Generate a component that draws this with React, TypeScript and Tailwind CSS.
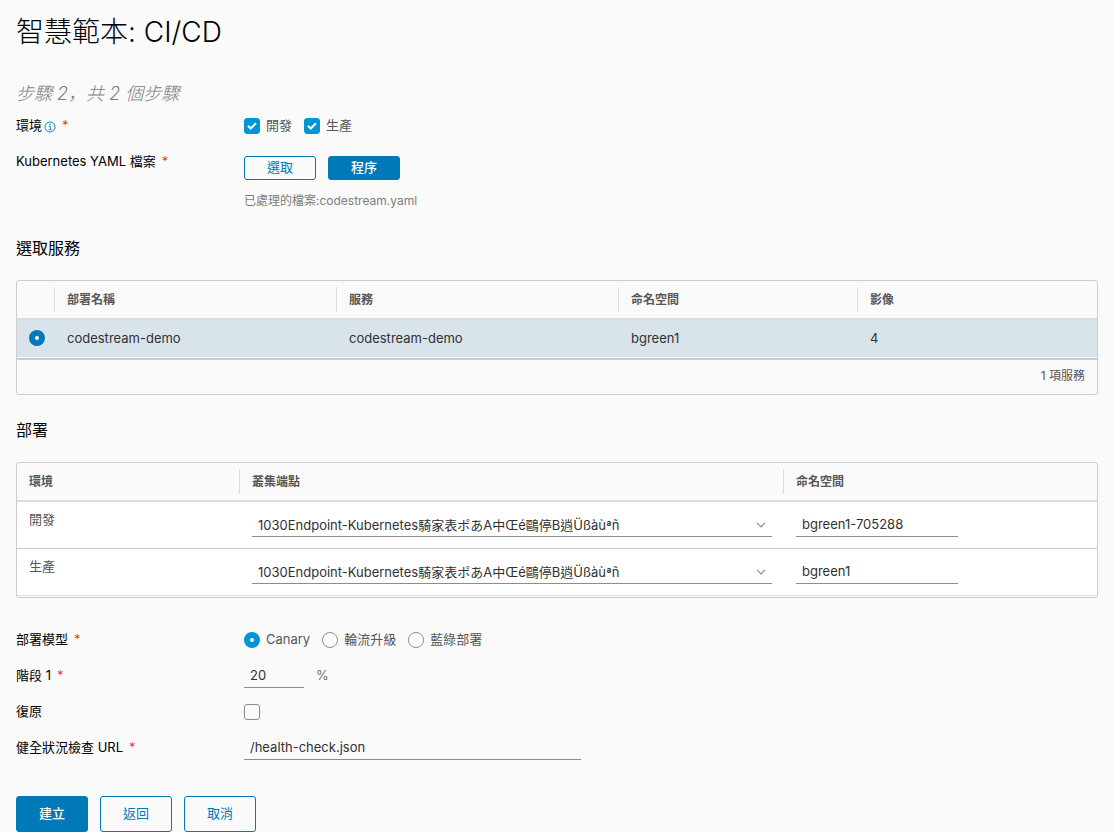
import { useState } from "react";
import type { ReactNode } from "react";
import { clsx } from "clsx";

type Option = {
  value: string;
  label: string;
};

const endpoint = "1030Endpoint-Kubernetes騎家表ポあA中Œé鷗停B逍Üßàùªñ";

const environments = [
  { id: "dev", name: "開發", namespace: "bgreen1-705288" },
  { id: "prod", name: "生產", namespace: "bgreen1" },
];

const services = [
  {
    deployment: "codestream-demo",
    service: "codestream-demo",
    namespace: "bgreen1",
    images: 4,
  },
];

const models: Option[] = [
  { value: "canary", label: "Canary" },
  { value: "rolling", label: "輪流升級" },
  { value: "blue-green", label: "藍綠部署" },
];

const inputClass =
  "h-6 rounded-none border-b border-[#8c8c8c] bg-transparent px-1.5 pb-0.5 text-[13px] text-[#313131] outline-none focus:border-[#0079b8]";

export default function App() {
  const [model, setModel] = useState("canary");

  return (
    <main className="min-h-screen bg-[#fafafa] pr-[15px] pl-4 font-['Inter','Noto_Sans_CJK_TC',sans-serif] text-[13px] leading-6 text-[#565656]">
      <h1 className="pt-3.5 text-[28px] leading-9 font-light text-black">
        智慧範本: CI/CD
      </h1>
      <p className="pt-[30px] font-['Inter','Noto_Sans_CJK_JP',sans-serif] text-lg leading-7 font-light text-[#7c7c7c] italic">
        步驟 2，共 2 個步驟
      </p>

      <form onSubmit={(e) => e.preventDefault()}>
        <FormRow
          label={
            <span className="inline-flex items-center gap-0.5">
              環境
              <InfoIcon />
            </span>
          }
          required
        >
          <div className="flex gap-3 py-1.5">
            {environments.map(({ id, name }) => (
              <label key={id} className="flex items-center gap-1.5">
                <Checkbox defaultChecked />
                <span className="pb-0.5 leading-[22px]">{name}</span>
              </label>
            ))}
          </div>
        </FormRow>

        <FormRow label="Kubernetes YAML 檔案" required>
          <div className="flex gap-3 pt-3">
            <Button small>選取</Button>
            <Button small primary>
              程序
            </Button>
          </div>
          <p className="pt-[9px] text-xs leading-6 text-[#7c7c7c]">
            已處理的檔案:codestream.yaml
          </p>
        </FormRow>

        <SectionTitle>選取服務</SectionTitle>
        <div className="rounded-[3px] border border-[#ccc]">
          <table className="w-full table-fixed border-separate border-spacing-0 text-left">
            <thead>
              <tr>
                <Th className="w-[38px]" />
                <Th className="w-[282px]">部署名稱</Th>
                <Th className="w-[282px]">服務</Th>
                <Th className="w-[239px]">命名空間</Th>
                <Th last>影像</Th>
              </tr>
            </thead>
            <tbody>
              {services.map((item) => (
                <tr
                  key={item.deployment}
                  className="h-[37px] bg-[#d9e4ea] text-[#313131]"
                >
                  <td className="pb-0.5 pl-3">
                    <input
                      type="radio"
                      name="service"
                      aria-label={item.deployment}
                      defaultChecked
                      className="block size-4 appearance-none rounded-full border border-[#8c8c8c] bg-white checked:border-[6px] checked:border-[#0079b8]"
                    />
                  </td>
                  <td className="px-3 pb-0.5">{item.deployment}</td>
                  <td className="px-3 pb-0.5">{item.service}</td>
                  <td className="px-3 pb-0.5">{item.namespace}</td>
                  <td className="px-3 pb-0.5">{item.images}</td>
                </tr>
              ))}
            </tbody>
          </table>
          <div className="mt-px border-t-2 border-[#ccc] px-3 pt-1 pb-1.5 text-right text-xs leading-6">
            1 項服務
          </div>
        </div>

        <SectionTitle>部署</SectionTitle>
        <div className="rounded-[3px] border border-[#ccc] pb-px">
          <table className="w-full table-fixed border-separate border-spacing-0 text-left">
            <thead>
              <tr>
                <Th className="w-[223px]">環境</Th>
                <Th className="w-[544px]">叢集端點</Th>
                <Th last>命名空間</Th>
              </tr>
            </thead>
            <tbody>
              {environments.map(({ id, name, namespace }) => (
                <tr key={id} className="group bg-white align-top">
                  <td className="border-b border-[#ccc] px-3 pt-[5px] group-last:border-[#ddd]">
                    {name}
                  </td>
                  <td className="border-b border-[#ccc] px-3 py-[11px] group-last:border-[#ddd]">
                    <div className="relative">
                      <select
                        aria-label={`${name} 叢集端點`}
                        className={clsx(inputClass, "block w-full appearance-none")}
                      >
                        <option>{endpoint}</option>
                      </select>
                      <Chevron />
                    </div>
                  </td>
                  <td className="border-b border-[#ccc] px-3 py-[11px] group-last:border-[#ddd]">
                    <input
                      type="text"
                      aria-label={`${name} 命名空間`}
                      defaultValue={namespace}
                      className={clsx(inputClass, "block w-[162px]")}
                    />
                  </td>
                </tr>
              ))}
            </tbody>
          </table>
        </div>

        <div className="pt-6">
          <FormRow label="部署模型" required>
            <div className="flex gap-3 py-1.5">
              {models.map(({ value, label }) => (
                <label key={value} className="flex items-center gap-1.5">
                  <input
                    type="radio"
                    name="model"
                    value={value}
                    checked={model === value}
                    onChange={() => setModel(value)}
                    className="size-4 appearance-none rounded-full border border-[#8c8c8c] bg-white checked:border-[6px] checked:border-[#0095d3]"
                  />
                  <span className="pb-0.5 leading-[22px]">{label}</span>
                </label>
              ))}
            </div>
          </FormRow>
          <FormRow label="階段 1" htmlFor="stage" required>
            <div className="flex gap-3 py-1.5">
              <input
                id="stage"
                type="text"
                defaultValue="20"
                className={clsx(inputClass, "w-15")}
              />
              <span className="pb-0.5 leading-[22px] text-[#737373]">%</span>
            </div>
          </FormRow>
          <FormRow label="復原" htmlFor="rollback">
            <div className="flex h-9 items-center">
              <Checkbox id="rollback" />
            </div>
          </FormRow>
          <FormRow label="健全狀況檢查 URL" htmlFor="health" required>
            <div className="flex py-1.5">
              <input
                id="health"
                type="text"
                defaultValue="/health-check.json"
                className={clsx(inputClass, "w-full max-w-[337px]")}
              />
            </div>
          </FormRow>
        </div>

        <div className="flex gap-3 pt-[30px]">
          <Button primary>建立</Button>
          <Button>返回</Button>
          <Button>取消</Button>
        </div>
      </form>
    </main>
  );
}

type FormRowProps = {
  label: ReactNode;
  htmlFor?: string;
  required?: boolean;
  children: ReactNode;
};

const FormRow = ({ label, htmlFor, required, children }: FormRowProps) => {
  const Tag = htmlFor ? "label" : "div";

  return (
    <div className="grid grid-cols-[228px_1fr]">
      <Tag
        htmlFor={htmlFor}
        className="flex h-9 items-center gap-1.5 pb-0.5 text-black"
      >
        {label}
        {required && <span className="font-light text-[#e12200]">*</span>}
      </Tag>
      <div>{children}</div>
    </div>
  );
};

const SectionTitle = ({ children }: { children: ReactNode }) => (
  <h2 className="pt-[23px] pb-5 text-base leading-6 text-black">{children}</h2>
);

type ThProps = {
  className?: string;
  last?: boolean;
  children?: ReactNode;
};

const Th = ({ className, last, children }: ThProps) => (
  <th
    className={clsx(
      "border-b-2 border-[#ddd] py-1.5 text-xs font-semibold",
      className,
    )}
  >
    <div
      className={clsx(
        "h-[25px] px-3 leading-[25px]",
        !last && "border-r border-[#ddd]",
      )}
    >
      {children}
    </div>
  </th>
);

type ButtonProps = {
  primary?: boolean;
  small?: boolean;
  children: ReactNode;
};

const Button = ({ primary, small, children }: ButtonProps) => (
  <button
    type="button"
    className={clsx(
      "flex w-18 items-center justify-center rounded-[3px] border border-[#0079b8] pb-0.5 text-[13px] leading-5",
      small ? "h-6" : "h-9",
      primary ? "bg-[#0079b8] font-medium text-white" : "text-[#0079b8]",
    )}
  >
    {children}
  </button>
);

const Checkbox = ({
  id,
  defaultChecked,
}: {
  id?: string;
  defaultChecked?: boolean;
}) => (
  <span className="relative size-4">
    <input
      id={id}
      type="checkbox"
      defaultChecked={defaultChecked}
      className="peer block size-4 appearance-none rounded-[3px] border border-[#8c8c8c] checked:border-[#0095d3] checked:bg-[#0095d3]"
    />
    <svg
      viewBox="0 0 16 16"
      className="pointer-events-none absolute inset-0 hidden size-4 peer-checked:block"
    >
      <path d="M4 7.8l2.7 2.7L12 5.2" fill="none" stroke="#fff" strokeWidth="2" />
    </svg>
  </span>
);

const InfoIcon = () => (
  <svg viewBox="0 0 12 12" className="mt-1 size-3" fill="none" stroke="#0079b8">
    <circle cx="6" cy="6" r="5" strokeWidth="0.9" />
    <path d="M4.8 5.2h1.5v3.4M4.6 8.7h3" strokeWidth="0.9" />
    <circle cx="6" cy="3.4" r="0.7" fill="#0079b8" stroke="none" />
  </svg>
);

const Chevron = () => (
  <svg
    viewBox="0 0 10 6"
    className="pointer-events-none absolute top-[9px] right-1.5 h-1.5 w-2.5"
  >
    <path d="M1 0.8l4 4 4-4" fill="none" stroke="#8c8c8c" strokeWidth="1.2" />
  </svg>
);
